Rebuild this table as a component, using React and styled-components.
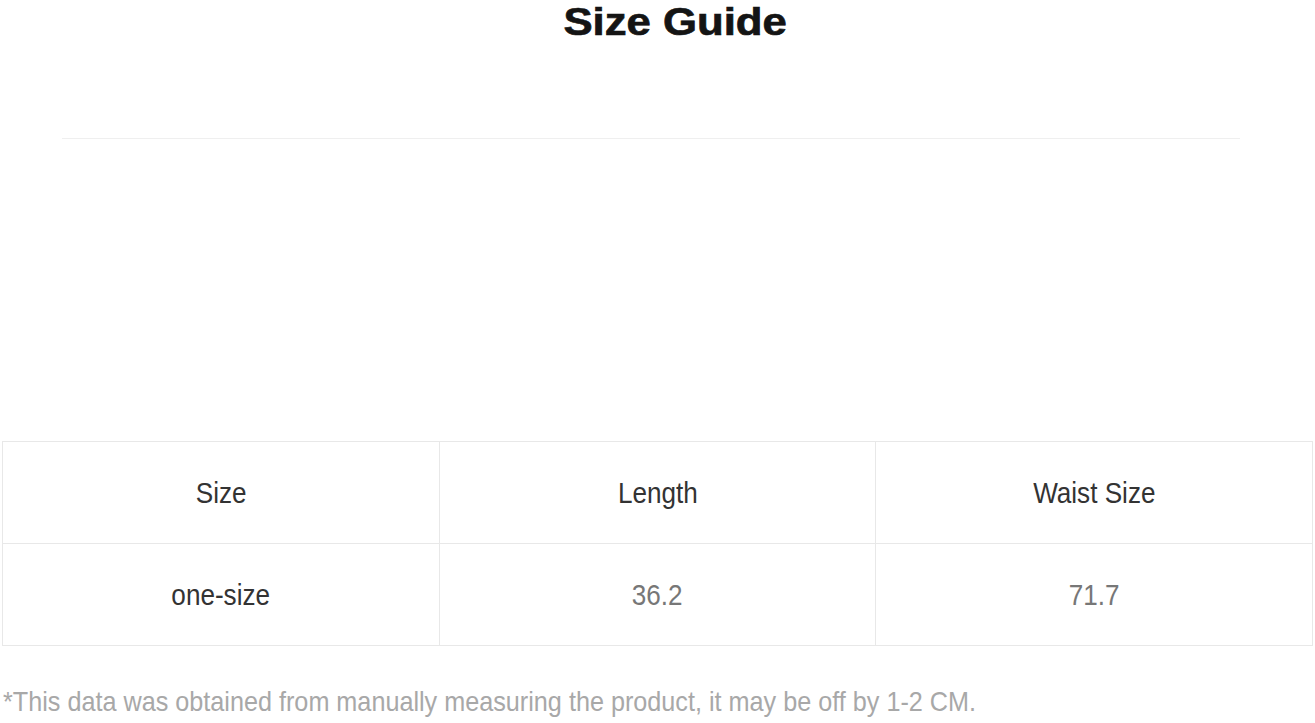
import React from 'react';
import styled, { createGlobalStyle } from 'styled-components';

// ---- Global ----
const GlobalStyle = createGlobalStyle`
  html, body {
    margin: 0;
    padding: 0;
    background: #ffffff;
  }
  body {
    font-family: 'Liberation Sans', Arial, sans-serif;
  }
`;

// ---- Styled Components ----
const Page = styled.div`
  width: 1315px;
  height: 723px;
  overflow: hidden;
  display: flex;
  flex-direction: column;
`;

const Title = styled.h1`
  margin: 0;
  padding-left: 36px;
  text-align: center;
  font-size: 38px;
  line-height: 44px;
  font-weight: 700;
  color: #141414;
  -webkit-text-stroke: 0.7px #141414;
`;

const Stretch = styled.span`
  display: inline-block;
  transform: scaleX(${({ $x }) => $x});
  transform-origin: ${({ $origin }) => $origin || 'center'};
  white-space: nowrap;
`;

const Divider = styled.hr`
  margin: 94px 0 0 62px;
  width: 1178px;
  border: 0;
  height: 1px;
  background: #efefef;
`;

const Table = styled.table`
  margin: 302px 0 0 2px;
  width: 1311px;
  border-collapse: collapse;
  table-layout: fixed;
`;

const Cell = styled.td`
  height: 101px;
  padding: 0;
  border: 1px solid #e8e8e8;
  text-align: center;
  vertical-align: middle;
  font-size: 30px;
  line-height: 34px;
  color: ${({ $muted }) => ($muted ? '#777777' : '#333333')};
`;

const Note = styled.p`
  margin: 39px 0 0 3px;
  font-size: 28px;
  line-height: 34px;
  color: #a8a8a8;
`;

// ---- Data ----
const HEADERS = ['Size', 'Length', 'Waist Size'];
const ROWS = [['one-size', '36.2', '71.7']];

// ---- Component ----
const App = () => (
  <Page>
    <GlobalStyle />
    <Title>
      <Stretch $x={1.15}>Size Guide</Stretch>
    </Title>
    <Divider />
    <Table>
      <tbody>
        <tr>
          {HEADERS.map((h) => (
            <Cell key={h}>
              <Stretch $x={0.87}>{h}</Stretch>
            </Cell>
          ))}
        </tr>
        {ROWS.map((row) => (
          <tr key={row[0]}>
            {row.map((value, i) => (
              <Cell key={i} $muted={i > 0}>
                <Stretch $x={0.87}>{value}</Stretch>
              </Cell>
            ))}
          </tr>
        ))}
      </tbody>
    </Table>
    <Note>
      <Stretch $x={0.9} $origin="left">
        *This data was obtained from manually measuring the product, it may be off by 1-2 CM.
      </Stretch>
    </Note>
  </Page>
);

export default App;
